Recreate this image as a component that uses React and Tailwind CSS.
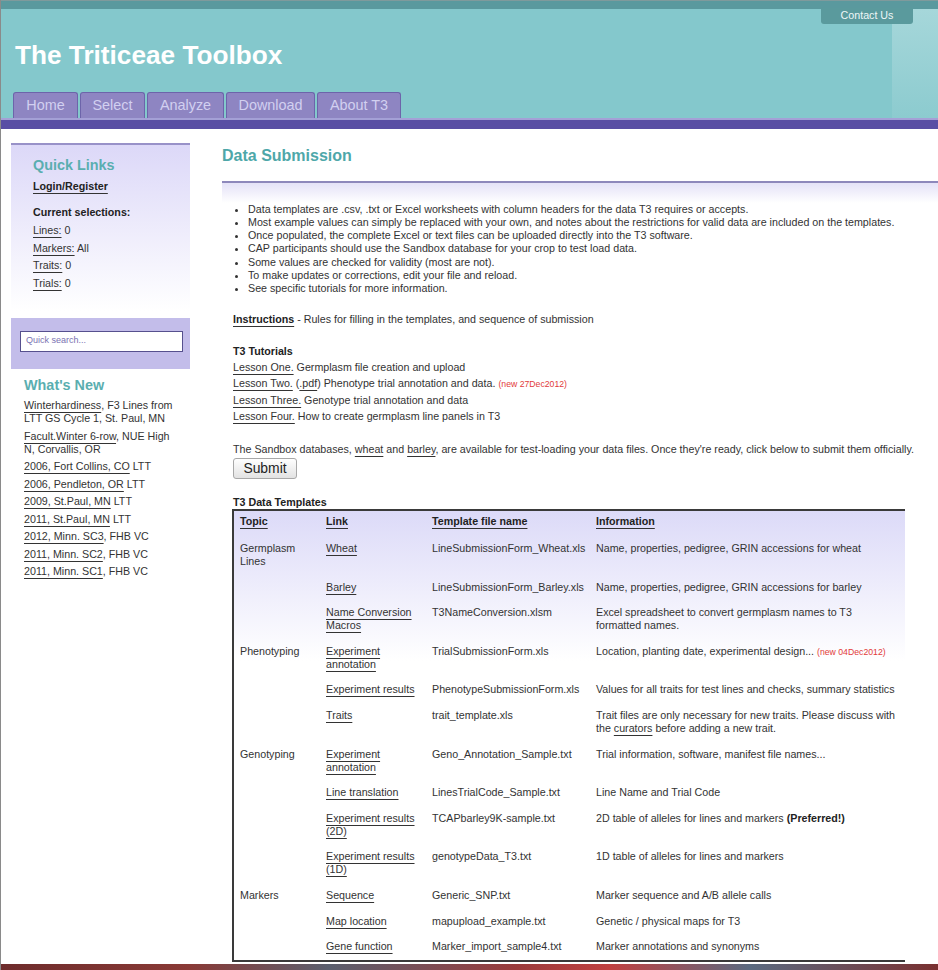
import React from "react"

const FONT = "font-['Liberation_Sans',Arial,Helvetica,sans-serif]"

const U = ({ children }) => (
  <span className="underline decoration-[#333] decoration-1 underline-offset-[2.5px]">{children}</span>
)
const New = ({ children }) => <span className="text-[8.7px] text-[#e23a3a]">{children}</span>

const tabs = [
  { label: "Home", w: "w-[65px]" },
  { label: "Select", w: "w-[65px]" },
  { label: "Analyze", w: "w-[77px]" },
  { label: "Download", w: "w-[89px]" },
  { label: "About T3", w: "w-[84px]" },
]

const bullets = [
  "Data templates are .csv, .txt or Excel worksheets with column headers for the data T3 requires or accepts.",
  "Most example values can simply be replaced with your own, and notes about the restrictions for valid data are included on the templates.",
  "Once populated, the complete Excel or text files can be uploaded directly into the T3 software.",
  "CAP participants should use the Sandbox database for your crop to test load data.",
  "Some values are checked for validity (most are not).",
  "To make updates or corrections, edit your file and reload.",
  "See specific tutorials for more information.",
]

// [underlined part, rest of first line, second line]
const whatsNew = [
  ["Winterhardiness", ", F3 Lines from", "LTT GS Cycle 1, St. Paul, MN"],
  ["Facult.Winter 6-row", ", NUE High", "N, Corvallis, OR"],
  ["2006, Fort Collins, CO", " LTT"],
  ["2006, Pendleton, OR", " LTT"],
  ["2009, St.Paul, MN", " LTT"],
  ["2011, St.Paul, MN", " LTT"],
  ["2012, Minn. SC3", ", FHB VC"],
  ["2011, Minn. SC2", ", FHB VC"],
  ["2011, Minn. SC1", ", FHB VC"],
]

const rows = [
  { topic: "Germplasm Lines", link: "Wheat", file: "LineSubmissionForm_Wheat.xls", info: "Name, properties, pedigree, GRIN accessions for wheat" },
  { link: "Barley", file: "LineSubmissionForm_Barley.xls", info: "Name, properties, pedigree, GRIN accessions for barley" },
  { link: "Name Conversion Macros", file: "T3NameConversion.xlsm", info: "Excel spreadsheet to convert germplasm names to T3 formatted names." },
  {
    topic: "Phenotyping",
    link: "Experiment annotation",
    file: "TrialSubmissionForm.xls",
    info: (
      <>
        Location, planting date, experimental design... <New>(new 04Dec2012)</New>
      </>
    ),
  },
  { link: "Experiment results", file: "PhenotypeSubmissionForm.xls", info: "Values for all traits for test lines and checks, summary statistics" },
  {
    link: "Traits",
    file: "trait_template.xls",
    info: (
      <>
        <div>Trait files are only necessary for new traits. Please discuss with</div>
        <div>
          the <U>curators</U> before adding a new trait.
        </div>
      </>
    ),
  },
  { topic: "Genotyping", link: "Experiment annotation", file: "Geno_Annotation_Sample.txt", info: "Trial information, software, manifest file names..." },
  { link: "Line translation", file: "LinesTrialCode_Sample.txt", info: "Line Name and Trial Code" },
  {
    link: "Experiment results (2D)",
    file: "TCAPbarley9K-sample.txt",
    info: (
      <>
        2D table of alleles for lines and markers <b className="text-[#222]">(Preferred!)</b>
      </>
    ),
  },
  { link: "Experiment results (1D)", file: "genotypeData_T3.txt", info: "1D table of alleles for lines and markers" },
  { topic: "Markers", link: "Sequence", file: "Generic_SNP.txt", info: "Marker sequence and A/B allele calls" },
  { link: "Map location", file: "mapupload_example.txt", info: "Genetic / physical maps for T3" },
  { link: "Gene function", file: "Marker_import_sample4.txt", info: "Marker annotations and synonyms" },
]

const Header = () => (
  <div className="relative">
    <div className="h-[9px] bg-[#5a999e] border-t border-[#7f9a9c]" />
    <div className="flex h-[109px] bg-[#84c8cc]">
      <div className="flex flex-1 flex-col">
        <div className="pl-[14px] pt-[31px] text-[26.2px] font-bold leading-[30px] text-white">
          The Triticeae Toolbox
        </div>
        <div className="mt-auto flex gap-[2px] pl-[12px]">
          {tabs.map((t) => (
            <div
              key={t.label}
              className={`${t.w} h-[26px] rounded-t-[3px] border border-b-0 border-[#6d64aa] bg-[#8e85c2] text-center text-[14.4px] leading-[25px] text-[#d2d0f0]`}
            >
              {t.label}
            </div>
          ))}
        </div>
      </div>
      <div className="w-[46px] bg-[linear-gradient(to_bottom,#a6d7da,#8ccbcf)]" />
    </div>
    <div className="h-[1.5px] bg-[#a4a0d6]" />
    <div className="h-[9px] bg-[#594ea4]" />
    <div className="absolute right-[25px] top-[8px] h-[16px] w-[92px] rounded-b-[3px] bg-[#5a9a9d] text-center text-[10.7px] leading-[15px] text-[#eef7f7]">
      Contact Us
    </div>
  </div>
)

const Sidebar = () => (
  <div className="ml-[10px] mt-[14px] w-[179px] shrink-0">
    <div className="border-t-2 border-[#9891c8] bg-[linear-gradient(to_bottom,#dcd8f8,#ffffff)] pb-[18px] pl-[22px] pt-[12px]">
      <div className="text-[14.4px] font-bold leading-[17px] text-[#5aaeb0]">Quick Links</div>
      <div className="mt-[6px] leading-[13px] font-bold text-[#222]">
        <U>Login/Register</U>
      </div>
      <div className="mt-[11.6px] leading-[17.7px]">
        <div className="font-bold text-[#222]">Current selections:</div>
        <div>
          <U>Lines:</U> 0
        </div>
        <div>
          <U>Markers:</U> All
        </div>
        <div>
          <U>Traits:</U> 0
        </div>
        <div>
          <U>Trials:</U> 0
        </div>
      </div>
    </div>
    <div className="mt-[7px] h-[51px] bg-[#c3bdea] pl-[9px] pt-[13px]">
      <div className="flex h-[21px] w-[163px] items-center border border-[#56508e] bg-white pl-[5px] text-[9px] text-[#7a72b2]">
        Quick search...
      </div>
    </div>
    <div className="pl-[13px]">
      <div className="mt-[8.5px] text-[14.4px] font-bold leading-[17px] text-[#5aaeb0]">What's New</div>
      <div className="mt-[5px] w-[160px] leading-[13px]">
        {whatsNew.map(([a, b, c]) => (
          <div key={a} className="mb-[4.5px]">
            <div>
              <U>{a}</U>
              {b}
            </div>
            {c && <div>{c}</div>}
          </div>
        ))}
      </div>
    </div>
  </div>
)

const Table = () => (
  <div className="w-[673px] border-b-2 border-l-2 border-t-2 border-[#3a3a3a] bg-[linear-gradient(to_bottom,#dcdaf8,#ffffff_150px)]">
    <div className="grid grid-cols-[86px_106px_164px_1fr] pb-[8px] pt-[3.5px] font-bold leading-[13px] text-[#222]">
      <div className="pl-[6px]"><U>Topic</U></div>
      <div className="pl-[6px]"><U>Link</U></div>
      <div className="pl-[6px]"><U>Template file name</U></div>
      <div className="pl-[6px]"><U>Information</U></div>
    </div>
    {rows.map((r, i) => (
      <div key={i} className="grid grid-cols-[86px_106px_164px_1fr] pb-[6.6px] pt-[6px] leading-[13px]">
        <div className="pl-[6px] pr-[4px]">{r.topic}</div>
        <div className="pl-[6px]">
          <U>{r.link}</U>
        </div>
        <div className="pl-[6px]">{r.file}</div>
        <div className="pl-[6px] pr-[9px]">{r.info}</div>
      </div>
    ))}
  </div>
)

const Main = () => (
  <div className="ml-[32px] flex-1">
    <h1 className="mt-[17.5px] text-[16px] font-bold leading-[19px] text-[#4ea7a9]">Data Submission</h1>
    <div className="mt-[15.5px] h-[2px] bg-[#8d88bb]" />
    <div className="h-[20.5px] bg-[linear-gradient(to_bottom,#e4e2f7,#ffffff)]" />
    <ul className="list-disc pl-[26px] leading-[13.15px]">
      {bullets.map((b) => (
        <li key={b}>{b}</li>
      ))}
    </ul>
    <div className="pl-[11px] leading-[16px]">
      <div className="mt-[16.4px]">
        <b className="text-[#222]">
          <U>Instructions</U>
        </b>{" "}
        - Rules for filling in the templates, and sequence of submission
      </div>
      <div className="mt-[16px] font-bold text-[#222]">T3 Tutorials</div>
      <div>
        <U>Lesson One.</U> Germplasm file creation and upload
      </div>
      <div>
        <U>Lesson Two.</U> (<U>.pdf</U>) Phenotype trial annotation and data. <New>(new 27Dec2012)</New>
      </div>
      <div>
        <U>Lesson Three.</U> Genotype trial annotation and data
      </div>
      <div>
        <U>Lesson Four.</U> How to create germplasm line panels in T3
      </div>
      <div className="mt-[17px]">
        The Sandbox databases, <U>wheat</U> and <U>barley</U>, are available for test-loading your data files. Once
        they're ready, click below to submit them officially.
      </div>
      <button className="mt-[1px] h-[21px] w-[64px] rounded-[3px] border border-[#a8a8a8] bg-[linear-gradient(to_bottom,#ffffff,#e2e2e2)] text-[13.9px] leading-[19px] text-[#222]">
        Submit
      </button>
      <div className="mt-[17px] font-bold leading-[13px] text-[#222]">T3 Data Templates</div>
      <div className="-ml-[1px]">
        <Table />
      </div>
    </div>
  </div>
)

export default function App() {
  return (
    <div className={`${FONT} min-h-[970px] w-[938px] overflow-hidden border-l border-[#8a8a8a] bg-white text-[10.7px] text-[#333]`}>
      <Header />
      <div className="flex">
        <Sidebar />
        <Main />
      </div>
      <div className="mt-[2px] h-[7px] bg-[linear-gradient(to_right,#6e2c2c,#8a3a36_20%,#5a5f6e_35%,#9a3b3b_55%,#c04040_65%,#5a6a80_80%,#7a3030)]" />
    </div>
  )
}
